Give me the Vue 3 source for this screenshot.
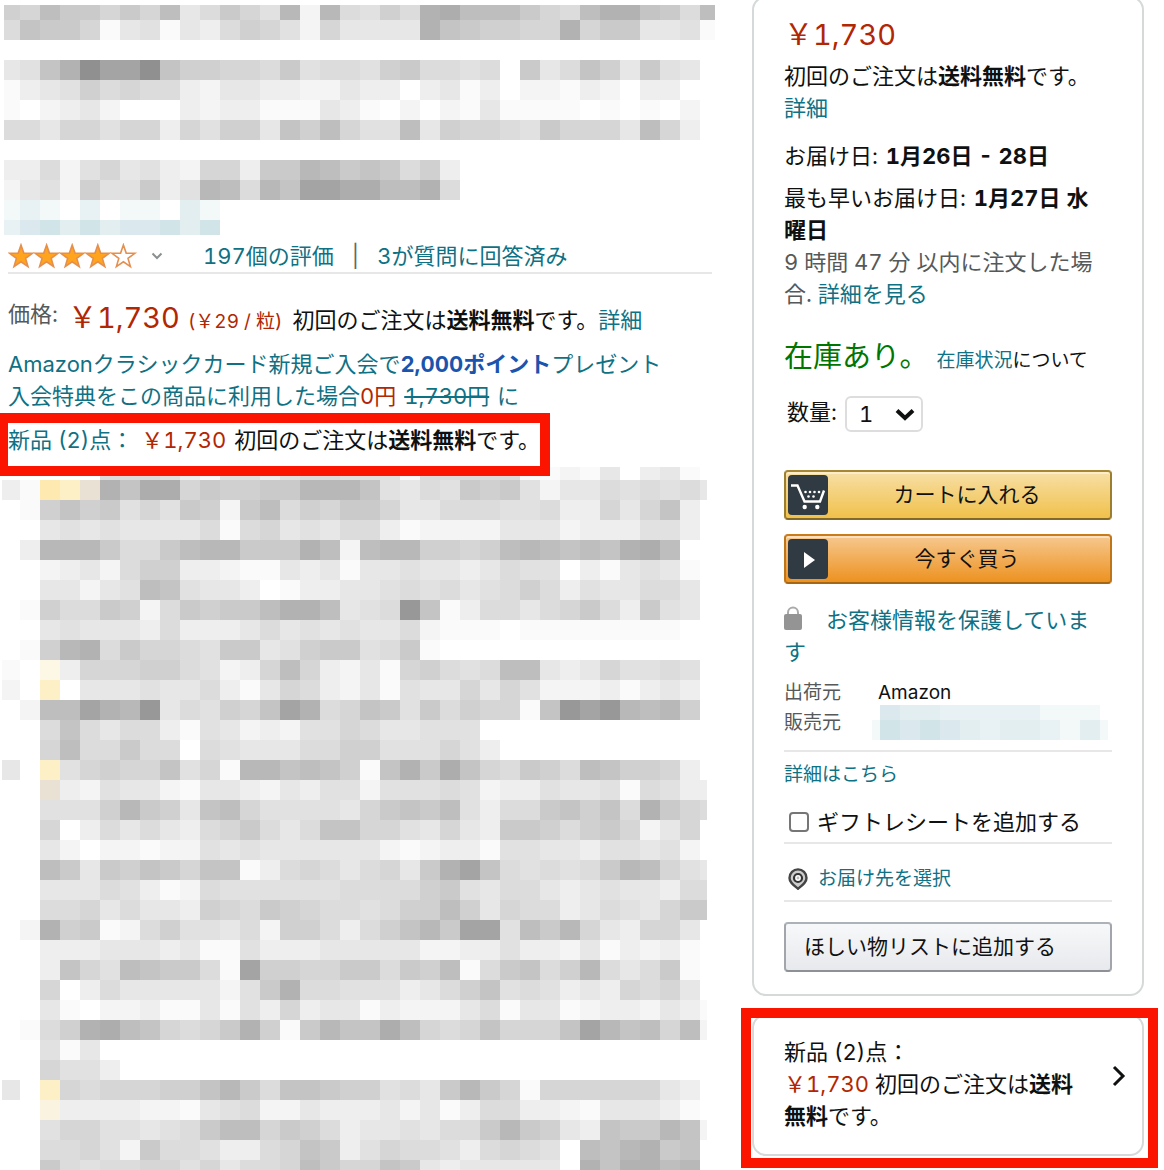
<template>
  <div class="page">
    <main class="product">
      <svg class="mosaic" viewBox="0 0 741 240" shape-rendering="crispEdges" aria-hidden="true">
        <rect v-for="(c, i) in titleCells" :key="i" :x="c.x" :y="c.y" :width="c.w" :height="c.h" :fill="c.fill" />
      </svg>

      <div class="rating">
        <svg class="stars" viewBox="0 0 130 26" role="img" aria-label="5つ星のうち4">
          <path
            v-for="n in 5"
            :key="n"
            :transform="`translate(${(n - 1) * 25.6} 0)`"
            d="M13 2 L15.8 10.1 L24.4 10.3 L17.6 15.4 L20 23.6 L13 18.8 L6 23.6 L8.4 15.4 L1.6 10.3 L10.2 10.1 Z"
            :fill="n < 5 ? '#ffa41c' : '#fff'"
            stroke="#e58f4e"
            stroke-width="1.6"
          />
        </svg>
        <svg class="caret" viewBox="0 0 12 8" aria-hidden="true">
          <path d="M1.5 1.5 L6 6 L10.5 1.5" fill="none" stroke="#8a8f8f" stroke-width="2" />
        </svg>
        <a href="#">197個の評価</a>
        <span class="divider">|</span>
        <a href="#">3が質問に回答済み</a>
      </div>

      <div class="price-row">
        <span class="label">価格:</span>
        <span class="price">￥1,730</span>
        <span class="unit">(￥29 / 粒)</span>
        <span>初回のご注文は<b>送料無料</b>です。<a href="#">詳細</a></span>
      </div>

      <p class="promo">
        Amazonクラシックカード新規ご入会で<b>2,000ポイント</b>プレゼント<br />
        入会特典をこの商品に利用した場合<span class="red">0円</span> <s>1,730円</s> に
      </p>

      <div class="offer">
        <a href="#">新品 (2)点：</a> <span class="red">￥1,730</span> 初回のご注文は<b>送料無料</b>です。
      </div>

      <svg class="mosaic details" viewBox="0 0 741 703" shape-rendering="crispEdges" aria-hidden="true">
        <rect v-for="(c, i) in detailCells" :key="i" :x="c.x" :y="c.y" :width="c.w" :height="c.h" :fill="c.fill" />
      </svg>
    </main>

    <aside class="side">
      <section class="card buybox">
        <div class="price">￥1,730</div>
        <p class="shipping">初回のご注文は<b>送料無料</b>です。<a href="#">詳細</a></p>
        <p class="delivery">お届け日: <b>1月26日 - 28日</b></p>
        <p class="fastest">
          最も早いお届け日: <b>1月27日 水曜日</b><br />
          <span class="muted">9 時間 47 分 以内に注文した場合. <a href="#">詳細を見る</a></span>
        </p>

        <div class="stock">
          <span class="in-stock">在庫あり。</span>
          <span class="small"><a href="#">在庫状況</a>について</span>
        </div>

        <div class="quantity">
          <label for="qty">数量:</label>
          <div class="select">
            <select id="qty" v-model="quantity">
              <option v-for="n in 10" :key="n" :value="n">{{ n }}</option>
            </select>
            <svg viewBox="0 0 20 13" aria-hidden="true">
              <path d="M2 2.5 L10 10 L18 2.5" fill="none" stroke="#0f1111" stroke-width="4" />
            </svg>
          </div>
        </div>

        <button type="button" class="btn cart">
          <svg class="badge" viewBox="0 0 40 40" aria-hidden="true">
            <rect width="40" height="40" rx="4" fill="#303a42" />
            <path d="M3 10.5 H9.5 L16.5 26.5 H32 L36 15.5" fill="none" stroke="#fff" stroke-width="2.4" />
            <g fill="#fff">
              <circle cx="16.7" cy="32" r="2.2" />
              <circle cx="29.3" cy="32" r="2.2" />
              <circle cx="17.5" cy="17" r="1.3" />
              <circle cx="22" cy="17" r="1.3" />
              <circle cx="26.5" cy="17" r="1.3" />
              <circle cx="31" cy="17" r="1.3" />
              <circle cx="20.5" cy="21.5" r="1.3" />
              <circle cx="25.5" cy="21.5" r="1.3" />
            </g>
          </svg>
          <span>カートに入れる</span>
        </button>
        <button type="button" class="btn buy">
          <svg class="badge" viewBox="0 0 40 40" aria-hidden="true">
            <rect width="40" height="40" rx="4" fill="#303a42" />
            <path d="M16 13 L27 21 L16 29 Z" fill="#fff" />
          </svg>
          <span>今すぐ買う</span>
        </button>

        <p class="secure">
          <svg viewBox="0 0 18 24" aria-hidden="true">
            <path d="M4 10 V6.5 a5 5 0 0 1 10 0 V10" fill="none" stroke="#aaa" stroke-width="2" />
            <rect y="8" width="18" height="16" rx="2" fill="#949494" />
          </svg>
          <a href="#">お客様情報を保護しています</a>
        </p>

        <dl class="seller">
          <dt>出荷元</dt>
          <dd>Amazon</dd>
          <dt>販売元</dt>
          <dd>
            <svg class="seller-mosaic" viewBox="0 0 236 35" shape-rendering="crispEdges" aria-hidden="true">
              <rect v-for="(c, i) in sellerCells" :key="i" :x="c.x" :y="c.y" :width="c.w" :height="c.h" :fill="c.fill" />
            </svg>
          </dd>
        </dl>

        <div class="more small"><a href="#">詳細はこちら</a></div>

        <div class="gift">
          <input id="gift" v-model="giftReceipt" type="checkbox" />
          <label for="gift">ギフトレシートを追加する</label>
        </div>

        <div class="destination small">
          <svg viewBox="0 0 20 22" aria-hidden="true">
            <path
              d="M10 1.4 a8.5 8.5 0 0 1 8.5 8.5 c0 4.6-4.1 7.2-8.5 10.8 c-4.4-3.6-8.5-6.2-8.5-10.8 a8.5 8.5 0 0 1 8.5-8.5 Z"
              fill="#ccc"
              stroke="#444"
              stroke-width="2.4"
            />
            <circle cx="10" cy="10" r="4" fill="#fff" stroke="#333" stroke-width="2.2" />
            <circle cx="10" cy="10" r="1.4" fill="#bbb" />
          </svg>
          <a href="#">お届け先を選択</a>
        </div>

        <button type="button" class="btn wishlist">ほしい物リストに追加する</button>
      </section>

      <div class="highlight">
        <section class="card others">
          <p>
            新品 (2)点：<br />
            <span class="red">￥1,730</span> 初回のご注文は<b>送料無料</b>です。
          </p>
          <svg viewBox="0 0 14 22" aria-hidden="true">
            <path d="M2 2 L11 11 L2 20" fill="none" stroke="#0f1111" stroke-width="3" />
          </svg>
        </section>
      </div>
    </aside>
  </div>
</template>

<script setup>
import { ref } from 'vue';

const quantity = ref(1);
const giftReceipt = ref(false);

// one letter per cell, a (lightest) to q (darkest); capitals are tinted cells
const palette = {
  a: '#fafafa', b: '#f4f4f4', c: '#eeeeee', d: '#e7e7e7', e: '#e1e1e1', f: '#dcdcdc',
  g: '#d6d6d6', h: '#d0d0d0', i: '#cacaca', j: '#c4c4c4', k: '#bebebe', l: '#b8b8b8',
  m: '#b2b2b2', n: '#adadad', o: '#a4a4a4', p: '#989898', q: '#8f908f',
  A: '#f3f8f9', B: '#e8f1f4', C: '#d1e4e7', D: '#e2eef0', E: '#dbe9ee',
  T: '#e9e1d3', V: '#faf3e0', W: '#fdf8e5', Y: '#feeab1', Z: '#fdf0c6',
};

// columns are 20px wide on the page grid, the first and last ones are cut
function buildCells(rows, left, right) {
  const cells = [];
  rows.forEach(([y, h, line]) => {
    [...line].forEach((key, col) => {
      if (key === '.') return;
      const x = Math.max(col * 20, left);
      const end = Math.min(col * 20 + 20, right);
      cells.push({ x, y, w: end - x, h, fill: palette[key] });
    });
  });
  return cells;
}

const titleCells = buildCells([
  [5, 15, 'hgkiigigkdfigelblfehfmnkkkigfkmmjifk'],
  [20, 20, 'fjiigadeadcfhgebgddddmjihhggmgiiddea'],
  [60, 20, 'dejmqooqjhhggfieffehiffef.idfjhdied.'],
  [80, 20, 'acdehfgffcbddccbbdcc.cdac.bbacb.cc..'],
  [100, 20, 'a.bcdb...cbccaaadca.b.badaaaa.a.a.b.'],
  [120, 20, 'ffdggeggcgehhdjhkgeekdhggfeigggdkgc.'],
  [160, 20, 'ccfbegdecbggciilkijifhc'],
  [180, 20, 'bdebheeicelkfljoonnkkmf'],
  [200, 20, 'ABA.B.AA.DA'],
  [220, 15, 'BECDCDEECDC'],
], 4, 715);

const detailLines = [
  'caYZTmjnngihhiillljedfeihiebddfefefd',
  '.ahjhiegeihbikfhgiigddfffeefccgdgjc.',
  '..dededdddfafgdedffcabbbbdddbccceec.',
  '.cllliffiklliiimkbkllhhghklkjkjmnk..',
  '..bcdbfhhccbaadcdaddeddcdfee.cadeda.',
  '..ddbdekjeddc.accddefefdefhfceddffd.',
  '.ahffihbfihiikmmkdefpjacffdfgifcied.',
  '..dedddcfcccdfdededdfbaaa.aaaaaaaa..',
  '.ahlmfiggfeiidehiiefia',
  'a.Wcggghhfebcgkgcbdaghfefkkdcdgeefe.',
  'b.Z.dddeddfcadgfcbdaeddgdgebbbcacdc.',
  '.bkkomlpdfehgjomfgjieifhggajpoplklh.',
  '..fjfdffcaedbcbeegfddeee',
  '..gkffiff.fedddffhheeegec',
  'd.Zeghggjegalljkjhajminjgfihfkjhhgc.',
  '..TcbeddbaddcbdceebeeefebcceddeafecC'.slice(0, 35) + 'c',
  '..eeehlihdjkgeeeedgijikecffijhjfmigf',
  '..g.cfdfdcfgifdfjjggedgdciihfhigbdg.',
  '..db.bbabbededdddddbabccaeeddceedeb.',
  '..kidihjigjjacfgfdfgdimojfefefilkged',
  '..dddfecabfeeeeeeffffhiedffdcdeddcff',
  '..ffgdfddchgfihgffefhhkhdgffcdfedgii',
  '.bmhiabfheedfbhhfcfhjliooekilgdcggd.',
  '..cccdddcdaaecccdddddbbcceccbdacbca.',
  '..cjgekjiifaohhggiifihkafijfhlfdfia.',
  '..g.cfdddddbeimffeeecdfhjefecdcgfgd.',
  '..da.bbcaadaecgcddacbbbdfaddabccbdca',
  '.afhmnkjgfgimhailjjnkgfgjgggjoljkgkb',
  '..ead',
  '..geec',
  'd.Zgfggghhjlifjjihhefdiligaggggggdc.',
  '..VccccbbadefbbdcccdbdacffccbadddcA.'.replace('A', 'a'),
  '..eggeedefikkgihfcddedffilihdcjiiljb',
  '..ffgebiffeccfgjicegffecfgfe.kjlmij.',
  '..ifeffggegdffgkiggjidcddddd.mjmmkl.',
];

const detailCells = buildCells([
  [0, 13, '.....fffecaeeceffeeeafffffaabad.cda.'],
  ...detailLines.map((line, i) => [13 + i * 20, 20, line]),
], 2, 707);

const sellerCells = buildCells([
  [0, 15, '.EDDBBBBBAAA.'],
  [15, 20, 'ACECEDBDDBADA'],
], 12, 248).map((c) => ({ ...c, x: c.x - 12 }));
</script>

<style>
body {
  margin: 0;
  background: #fff;
}
</style>

<style scoped>
.page {
  display: grid;
  grid-template-columns: minmax(0, 1fr) 423px;
  align-items: start;
  font-family: Inter, 'Noto Sans CJK JP', sans-serif;
  font-size: 22px;
  font-variant-numeric: tabular-nums;
  line-height: 32px;
  color: #0f1111;
}

p,
dl,
dd {
  margin: 0;
}

a {
  color: #0f7184;
  text-decoration: none;
}

.mosaic {
  display: block;
  width: 100%;
}

.rating {
  display: flex;
  align-items: center;
  height: 32px;
  margin: 0 29px 0 8px;
  border-bottom: 2px solid #e7e7e7;
}

.stars {
  width: 130px;
  height: 26px;
}

.caret {
  width: 12px;
  height: 8px;
  margin: 0 40px 0 13px;
}

.divider {
  margin: 0 18px;
  color: #666;
}

.price {
  font-size: 29px;
  line-height: 40px;
  color: #b12704;
}

.red {
  color: #b12704;
}

.price-row {
  display: flex;
  align-items: baseline;
  margin: 24px 0 10px 8px;
  height: 40px;
  white-space: nowrap;
}

.price-row .label {
  align-self: flex-start;
  margin-right: 10px;
  color: #565959;
}

.unit {
  margin: 0 10px 0 8px;
  font-size: 19px;
  color: #b12704;
}

.promo {
  margin-left: 8px;
  color: #0f7184;
}

.promo b {
  color: #1a54ad;
}

.promo s {
  margin: 0 2px;
}

.offer {
  position: relative;
  box-sizing: border-box;
  width: 550px;
  max-width: 100%;
  margin-top: 1px;
  padding: 1px 0 10px;
  border: 10px solid #fb1500;
  border-left-width: 8px;
  background: #fff;
  white-space: nowrap;
}

.offer .red {
  margin: 0 2px;
}

/* the blurred details start right under the frame */
.details {
  margin-top: -9px;
}

.card {
  box-sizing: border-box;
  border: 2px solid #d5d9d9;
  border-radius: 14px;
}

.buybox {
  margin: -4px 20px 0 11px;
  padding: 17px 30px 22px;
}

.shipping {
  margin-top: 5px;
}

.shipping a {
  display: inline-block;
}

.delivery {
  margin-top: 16px;
}

.fastest {
  margin-top: 10px;
  padding-right: 6px;
}

.delivery b,
.fastest b {
  margin-left: 2px;
}

.muted {
  color: #565959;
}

.small {
  font-size: 19px;
  line-height: 30px;
}

.stock {
  display: flex;
  align-items: baseline;
  gap: 8px;
  margin-top: 27px;
  white-space: nowrap;
}

.in-stock {
  font-size: 29px;
  line-height: 40px;
  color: #007600;
}

.quantity {
  display: flex;
  gap: 8px;
  margin: 19px 0 38px 3px;
}

.select {
  position: relative;
}

.select select {
  box-sizing: border-box;
  width: 78px;
  height: 36px;
  padding: 0 12px;
  border: 2px solid #ddd;
  border-radius: 6px;
  background: #fff;
  appearance: none;
  font: inherit;
  color: #0f1111;
}

.select svg {
  position: absolute;
  top: 12px;
  right: 8px;
  width: 20px;
  height: 13px;
  pointer-events: none;
}

.btn {
  display: flex;
  align-items: center;
  box-sizing: border-box;
  width: 100%;
  height: 50px;
  padding: 0 2px;
  border: 2px solid;
  border-radius: 4px;
  font: inherit;
  font-size: 21px;
  color: #111;
  cursor: pointer;
}

.btn span {
  flex: 1;
  padding-right: 2px;
}

.badge {
  width: 40px;
  height: 40px;
}

.cart {
  border-color: #a88734 #9c7e31 #846a29;
  background: linear-gradient(#f7dfa5, #f0c14b);
  box-shadow: inset 0 2px 0 #fbeccb;
}

.buy {
  margin-top: 14px;
  border-color: #ca7c1b #be751a #a56616;
  background: linear-gradient(#f6c88f, #ed9220);
  box-shadow: inset 0 2px 0 #fae0bf;
}

.wishlist {
  margin-top: 20px;
  padding: 0 18px;
  border-color: #adb1b8 #a2a6ac #8d9096;
  background: linear-gradient(#f7f8fa, #e7e9ec);
}

.secure {
  margin-top: 20px;
  padding-right: 6px;
}

.secure svg {
  width: 18px;
  height: 24px;
  margin-right: 24px;
  vertical-align: -2px;
}

.seller {
  display: grid;
  grid-template-columns: 94px 1fr;
  grid-auto-rows: 30px;
  margin-top: 10px;
  padding-bottom: 12px;
  border-bottom: 2px solid #e7e7e7;
  font-size: 19px;
  line-height: 30px;
}

.seller dt {
  color: #565959;
}

.seller-mosaic {
  display: block;
  width: 236px;
  height: 35px;
  margin: -3px 0 0 -6px;
}

.more {
  margin-top: 8px;
}

.gift {
  display: flex;
  align-items: center;
  gap: 8px;
  margin-top: 16px;
  padding: 0 0 4px 5px;
  border-bottom: 2px solid #e7e7e7;
}

.gift input {
  box-sizing: border-box;
  width: 20px;
  height: 20px;
  margin: 0;
  border: 2px solid #767676;
  border-radius: 4px;
  background: #fff;
  appearance: none;
}

.gift input:checked {
  background: #0f7184;
}

.destination {
  display: flex;
  align-items: center;
  gap: 10px;
  margin-top: 20px;
  padding: 0 0 6px 4px;
  border-bottom: 2px solid #e7e7e7;
}

.destination svg {
  width: 20px;
  height: 22px;
}

.highlight {
  margin: 12px 6px 0 0;
  padding: 0 4px 2px 1px;
  border: 10px solid #fb1500;
  overflow: hidden;
}

.others {
  display: flex;
  align-items: center;
  justify-content: space-between;
  margin-top: -4px;
  padding: 20px 16px 22px 30px;
}

.others p {
  width: 304px;
}

.others svg {
  flex: none;
  width: 14px;
  height: 22px;
  margin-bottom: 16px;
}
</style>
